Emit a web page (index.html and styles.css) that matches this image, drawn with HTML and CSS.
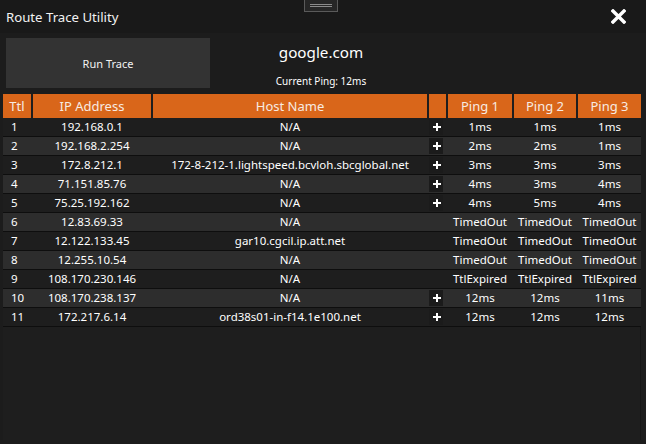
FILE: index.html
```html
<!DOCTYPE html>
<html>
<head>
<meta charset="utf-8">
<link rel="stylesheet" href="styles.css">
</head>
<body>
<div class="window">
  <div class="titlebar">
    <span class="title">Route Trace Utility</span>
    <svg class="close" width="15" height="15" viewBox="0 0 15 15"><path d="M2 2 L13 13 M13 2 L2 13" stroke="#fff" stroke-width="3.4" stroke-linecap="square"/></svg>
    <div class="handle"><span></span><span></span></div>
  </div>
  <div class="top">
    <div class="run">Run Trace</div>
    <div class="target">
      <div class="host">google.com</div>
      <div class="ping">Current Ping: 12ms</div>
    </div>
  </div>
  <div class="grid">
    <div class="hdr">
      <div>Ttl</div><div>IP Address</div><div>Host Name</div><div></div><div>Ping 1</div><div>Ping 2</div><div>Ping 3</div>
    </div>
    <div class="row"><div class="ttl">1</div><div>192.168.0.1</div><div>N/A</div><div class="plus"><i></i></div><div>1ms</div><div>1ms</div><div>1ms</div></div>
    <div class="row alt"><div class="ttl">2</div><div>192.168.2.254</div><div>N/A</div><div class="plus"><i></i></div><div>2ms</div><div>2ms</div><div>1ms</div></div>
    <div class="row"><div class="ttl">3</div><div>172.8.212.1</div><div>172-8-212-1.lightspeed.bcvloh.sbcglobal.net</div><div class="plus"><i></i></div><div>3ms</div><div>3ms</div><div>3ms</div></div>
    <div class="row alt"><div class="ttl">4</div><div>71.151.85.76</div><div>N/A</div><div class="plus"><i></i></div><div>4ms</div><div>3ms</div><div>4ms</div></div>
    <div class="row"><div class="ttl">5</div><div>75.25.192.162</div><div>N/A</div><div class="plus"><i></i></div><div>4ms</div><div>5ms</div><div>4ms</div></div>
    <div class="row alt"><div class="ttl">6</div><div>12.83.69.33</div><div>N/A</div><div></div><div>TimedOut</div><div>TimedOut</div><div>TimedOut</div></div>
    <div class="row"><div class="ttl">7</div><div>12.122.133.45</div><div>gar10.cgcil.ip.att.net</div><div></div><div>TimedOut</div><div>TimedOut</div><div>TimedOut</div></div>
    <div class="row alt"><div class="ttl">8</div><div>12.255.10.54</div><div>N/A</div><div></div><div>TimedOut</div><div>TimedOut</div><div>TimedOut</div></div>
    <div class="row"><div class="ttl">9</div><div>108.170.230.146</div><div>N/A</div><div></div><div>TtlExpired</div><div>TtlExpired</div><div>TtlExpired</div></div>
    <div class="row alt"><div class="ttl">10</div><div>108.170.238.137</div><div>N/A</div><div class="plus"><i></i></div><div>12ms</div><div>12ms</div><div>11ms</div></div>
    <div class="row"><div class="ttl">11</div><div>172.217.6.14</div><div>ord38s01-in-f14.1e100.net</div><div class="plus"><i></i></div><div>12ms</div><div>12ms</div><div>12ms</div></div>
  </div>
</div>
</body>
</html>
```
FILE: styles.css
```css
html, body {
  margin: 0;
  padding: 0;
  background: #1c1c1c;
}
body {
  font-family: "Segoe UI", "Noto Sans", "Open Sans", sans-serif;
  color: #fff;
}
.window {
  width: 646px;
  height: 444px;
  display: flex;
  flex-direction: column;
  background: #1c1c1c;
  overflow: hidden;
}
.titlebar {
  position: relative;
  height: 33px;
  flex: none;
  display: flex;
  align-items: center;
  justify-content: space-between;
  padding: 0 20px 0 6px;
  background: #191919;
}
.title {
  font-size: 13.2px;
  color: #f2f2f2;
}
.close {
  display: block;
}
.handle {
  position: absolute;
  left: 304px;
  top: -1px;
  width: 32px;
  height: 11px;
  border: 1px solid #5a5a5a;
  background: #262626;
  display: flex;
  flex-direction: column;
  align-items: center;
  justify-content: center;
  gap: 1px;
}
.handle span {
  display: block;
  width: 22px;
  height: 1px;
  background: #8a8a8a;
}
.top {
  flex: none;
  display: flex;
  padding: 5px 0 0 6px;
  height: 50px;
}
.run {
  width: 204px;
  height: 50px;
  background: #333333;
  display: flex;
  align-items: center;
  justify-content: center;
  font-size: 11px;
  color: #f2f2f2;
}
.target {
  width: 222px;
  display: flex;
  flex-direction: column;
  align-items: center;
  padding-top: 3px;
}
.host {
  font-size: 15.2px;
  line-height: 22px;
}
.ping {
  margin-top: 11px;
  font-size: 10px;
  line-height: 14px;
}
.grid {
  flex: 1;
  margin: 6px 5px 4px 3px;
  background: #1e1e1e;
  border-right: 1px solid #151515;
}
.hdr, .row {
  display: grid;
  grid-template-columns: 28px 118px 274px 17px 64px 62px 63px;
  column-gap: 2px;
  width: 638px;
}
.hdr {
  height: 23px;
  margin-bottom: 1px;
}
.hdr div {
  background: #d9661a;
  color: #f7ebe2;
  font-size: 13px;
  line-height: 23px;
  padding-top: 1px;
  box-sizing: border-box;
  text-align: center;
}
.row {
  height: 18px;
  border-bottom: 1px solid #0e0e0e;
  background: #1e1e1e;
}
.row.alt {
  background: #2d2d2d;
}
.row div {
  font-size: 11.5px;
  line-height: 18px;
  text-align: center;
  white-space: nowrap;
}
.row .ttl {
  text-align: left;
  padding-left: 8px;
}
.row .plus {
  display: flex;
  align-items: center;
}
.plus i {
  display: block;
  position: relative;
  width: 14px;
  height: 16px;
  background: #1b1b1b;
}
.plus i::before, .plus i::after {
  content: "";
  position: absolute;
  background: #fff;
}
.plus i::before {
  left: 4px;
  top: 7px;
  width: 8px;
  height: 2px;
}
.plus i::after {
  left: 7px;
  top: 4px;
  width: 2px;
  height: 8px;
}
```
